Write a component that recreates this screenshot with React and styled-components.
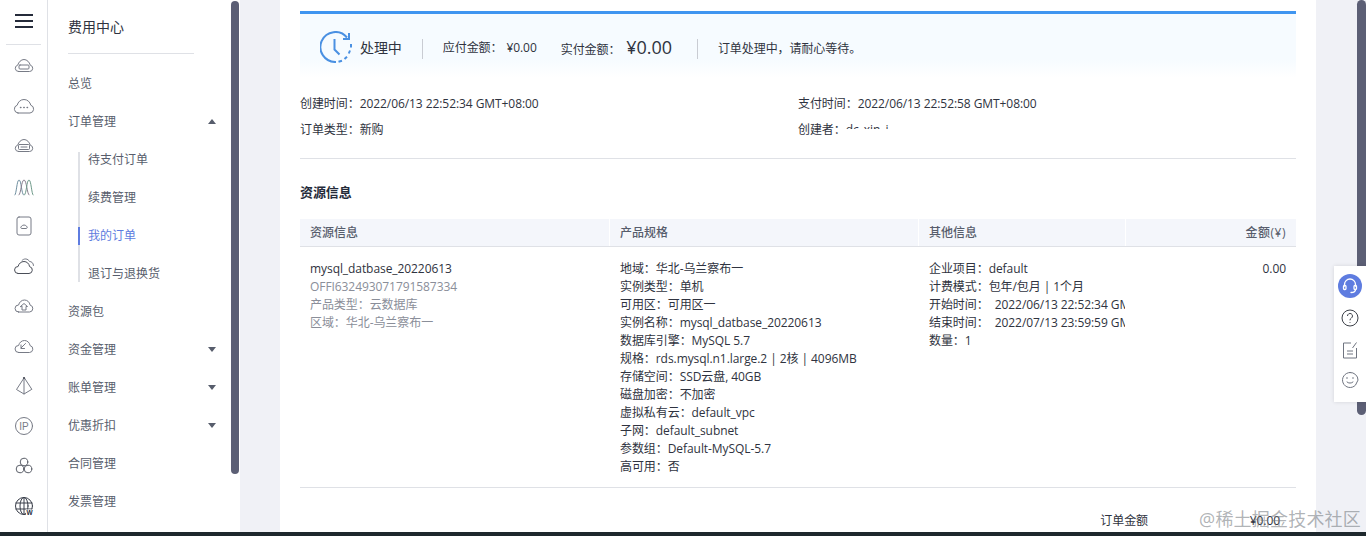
import React from "react";
import styled, { createGlobalStyle } from "styled-components";

const GlobalStyle = createGlobalStyle`
  html, body {
    margin: 0;
    padding: 0;
    height: 536px;
    overflow: hidden;
    background: #f0f1f6;
    font-family: "Open Sans", "Noto Sans CJK SC", sans-serif;
    font-size: 12px;
    color: #2f3340;
  }
`;

const Page = styled.div`
  position: relative;
  width: 1366px;
  height: 536px;
  display: flex;
  flex-direction: column;
  overflow: hidden;
`;

const Body = styled.div`
  flex: 1;
  min-height: 0;
  display: flex;
`;

const FooterBar = styled.div`
  height: 4px;
  background: #1e282d;
`;

const Rail = styled.nav`
  width: 47px;
  flex: none;
  background: #fff;
  border-right: 1px solid #dfe1e6;
`;

const RailHead = styled.div`
  height: 45px;
  margin: 0 6px 1px;
  padding-bottom: 2px;
  border-bottom: 1px solid #dfe1e6;
  display: flex;
  align-items: center;
  justify-content: center;
  box-sizing: border-box;
`;

const RailItem = styled.div`
  height: 40px;
  display: flex;
  align-items: center;
  justify-content: center;
`;

const Sidebar = styled.aside`
  position: relative;
  width: 192px;
  flex: none;
  background: #fff;
  padding-left: 20px;
  box-sizing: border-box;
`;

const SideTitle = styled.div`
  width: 126px;
  height: 54px;
  line-height: 54px;
  margin-bottom: 10px;
  font-size: 14px;
  color: #2f3340;
  border-bottom: 1px solid #dfe1e6;
  box-sizing: border-box;
`;

const SideItem = styled.div`
  width: 148px;
  height: 38px;
  display: flex;
  align-items: center;
  justify-content: space-between;
  color: #575d6c;
`;

const Caret = styled.span`
  width: 0;
  height: 0;
  border-left: 4px solid transparent;
  border-right: 4px solid transparent;
  ${(p) =>
    p.$up
      ? "border-bottom: 5px solid #575d6c;"
      : "border-top: 5px solid #575d6c;"}
`;

const SubList = styled.div`
  margin: 12px 0 10px 10px;
  border-left: 2px solid #dfe1e6;
  height: 130px;
`;

const SubItem = styled.div`
  height: 18px;
  line-height: 18px;
  margin-bottom: 20px;
  padding-left: 8px;
  position: relative;
  top: -1px;
  color: ${(p) => (p.$active ? "#5e7ce0" : "#575d6c")};
  ${(p) =>
    p.$active &&
    `
    margin-left: -2px;
    border-left: 2px solid #5e7ce0;
  `}
`;

const ScrollThumb = styled.div`
  position: absolute;
  top: ${(p) => p.$top}px;
  width: 9px;
  height: ${(p) => p.$height}px;
  background: #5c5f75;
  border-radius: 5px;
`;

const SideThumb = styled(ScrollThumb)`
  right: 1px;
  width: 8px;
`;

const PageThumb = styled(ScrollThumb)`
  right: 0;
`;

const Main = styled.main`
  flex: 1;
  min-width: 0;
  padding: 0 50px 0 40px;
`;

const Card = styled.div`
  height: 100%;
  background: #fff;
  padding: 11px 20px 0;
  overflow: hidden;
  box-sizing: border-box;
  letter-spacing: -0.07px;
`;

const Banner = styled.div`
  height: 67px;
  border-top: 3px solid #3f95f0;
  background: linear-gradient(#f6fbff 0, #f6fbff 70%, #fff 100%);
  padding: 2px 0 0 20px;
  display: flex;
  align-items: center;
  box-sizing: border-box;
`;

const StatusText = styled.span`
  font-size: 14px;
  margin-left: 8px;
`;

const VLine = styled.span`
  width: 1px;
  height: 20px;
  background: #c9ccd3;
  margin: 4px 20px 0 ${(p) => (p.$flush ? 0 : 20)}px;
`;

const Amount = styled.span`
  margin-right: ${(p) => p.$gap}px;
  display: flex;
  align-items: baseline;
`;

const SmallValue = styled.span`
  margin-left: 4px;
`;

const BigValue = styled.span`
  font-size: 18px;
  margin-left: 6px;
`;

const BannerNote = styled.span`
  margin-top: 2px;
`;

const InfoGrid = styled.div`
  display: grid;
  grid-template-columns: 498px 1fr;
  padding: 13px 0 15px;
  border-bottom: 1px solid #dfe1e6;
`;

const InfoCell = styled.div`
  height: 26px;
  line-height: 26px;
  white-space: nowrap;
`;

const ClippedName = styled.span`
  display: inline-block;
  height: 8px;
  width: 46px;
  line-height: 18px;
  overflow: hidden;
  vertical-align: 5px;
`;

const SectionTitle = styled.h3`
  margin: 0;
  height: 60px;
  line-height: 66px;
  font-size: 13px;
  font-weight: 600;
  color: #252b3a;
`;

const TableHead = styled.div`
  display: grid;
  grid-template-columns: 309px 309px 207px 171px;
  height: 28px;
  background: #f4f6fb;
  border-bottom: 1px solid #dfe1e6;
  box-sizing: border-box;
`;

const HeadCell = styled.div`
  padding: 1px 10px 0;
  line-height: 26px;
  font-weight: 500;
  color: #575d6c;
  text-align: ${(p) => (p.$right ? "right" : "left")};
  letter-spacing: ${(p) => (p.$right ? "0.5px" : "0")};
  & + & {
    border-left: 1px solid #fff;
  }
`;

const TableRow = styled.div`
  display: grid;
  grid-template-columns: 309px 309px 207px 171px;
  padding: 13px 0 11px;
  border-bottom: 1px solid #dfe1e6;
`;

const Cell = styled.div`
  padding: 0 10px;
  line-height: 18px;
  overflow: hidden;
  white-space: nowrap;
  text-align: ${(p) => (p.$right ? "right" : "left")};
  & + & {
    padding-left: 11px;
  }
  & + & + & + & {
    padding-left: 0;
  }
`;

const Line = styled.div`
  white-space: pre;
  color: ${(p) => (p.$muted ? "#8a8e99" : "#2f3340")};
`;

const SummaryRow = styled.div`
  display: flex;
  justify-content: flex-end;
  padding: 24px 16px 0 0;
  line-height: 18px;
`;

const SummaryValue = styled.span`
  width: 132px;
  text-align: right;
`;

const Widget = styled.div`
  position: absolute;
  top: 266px;
  right: 0;
  width: 32px;
  height: 136px;
  background: #fff;
  box-shadow: 0 0 4px rgba(0, 0, 0, 0.12);
  display: flex;
  flex-direction: column;
  align-items: center;
  padding-top: 4px;
  box-sizing: border-box;
`;

const WidgetItem = styled.div`
  height: 32px;
  width: 100%;
  display: flex;
  align-items: center;
  justify-content: center;
  margin-top: ${(p) => p.$shift || 0}px;
`;

const HelpBadge = styled.div`
  width: 24px;
  height: 24px;
  border-radius: 50%;
  background: #5e7ce0;
  display: flex;
  align-items: center;
  justify-content: center;
`;

const Watermark = styled.div`
  position: absolute;
  right: 5px;
  bottom: 5px;
  font-size: 18px;
  line-height: 24px;
  letter-spacing: 0.2px;
  color: rgba(110, 115, 120, 0.55);
`;

const Icon = ({ color = "#777b86", sw = 1, children }) => (
  <svg width="22" height="22" viewBox="0 0 22 22" fill="none" stroke={color} strokeWidth={sw} strokeLinecap="round" strokeLinejoin="round">
    {children}
  </svg>
);

const dome = "M5.500 16.500h11a3.200 3.200 0 0 0 .8-6.300C16.400 7.200 14 4.500 11 4.500S5.600 7.200 4.700 10.200a3.200 3.200 0 0 0 .8 6.300z";
const puff = "M5.500 17h11a3.500 3.500 0 0 0 .6-6.900C16.600 7 14.200 5 11.500 5 8.600 5 6.200 7.200 5.600 10a3.500 3.500 0 0 0-.1 7z";

const railIcons = [
  <Icon><path d={dome} /><rect x="6" y="10" width="10" height="4" rx="1" /></Icon>,
  <Icon>
    <path d="M5 18h12a4 4 0 0 0 .8-7.800C17 7 14.500 4.500 11 4.500S5 7 4.200 10.200A4 4 0 0 0 5 18z" />
    <path d="M7.500 12.500h.4M10.800 12.500h.4M14.100 12.500h.4" strokeWidth="1.500" />
  </Icon>,
  <Icon><path d={dome} /><rect x="5.500" y="9.500" width="11" height="5" rx="1" /><path d="M8 12h6" /></Icon>,
  <Icon>
    <path d="M2 20c1.500-1 1.800-15 4-15 2.400 0 2.400 14 4.500 15" stroke="#6f8fa0" />
    <path d="M6 20c2-1 2.400-15 5-15s3 14 5 15" stroke="#8a7f8f" />
    <path d="M11.500 20c2.100-1 2.100-15 4.500-15 2.200 0 2.500 14 4 15" stroke="#6f9a8a" />
  </Icon>,
  <Icon>
    <rect x="4" y="2" width="14" height="18" rx="2" />
    <path d="M8.500 13.500c-1.100 0-1.100-2.200.2-2.200.5-1.700 4.200-1.700 4.700 0 1.200 0 1.200 2.200 0 2.200z" />
  </Icon>,
  <Icon>
    <path d={puff} transform="translate(-.5 1.500)" stroke="#4a4e58" />
    <path d="M9 5.500c2-2.500 6-2 7.500 1 2 0 4 1.500 4 4" />
  </Icon>,
  <Icon><path d={puff} /><path d="M7.500 11.500 11 8.500l3.500 3h-1.500v3.500H9v-3.500z" /></Icon>,
  <Icon><path d={puff} transform="translate(0 .5)" /><path d="M12.500 8.500 8 13M8 10v3.500h3.500" /></Icon>,
  <Icon>
    <path d="M11 3 3.500 14.500 11 19l7.500-4.500zM11 3v16" />
    <circle cx="11" cy="3" r="1.100" fill="#4a4e58" stroke="none" />
  </Icon>,
  <Icon>
    <circle cx="11" cy="11" r="8.500" />
    <text x="11" y="14.500" fontSize="10" textAnchor="middle" fill="#777b86" stroke="none" fontFamily="Liberation Sans, sans-serif">IP</text>
  </Icon>,
  <Icon color="#5a5e68"><circle cx="11" cy="7" r="3.800" /><circle cx="7" cy="14" r="3.800" /><circle cx="15" cy="14" r="3.800" /></Icon>,
  <Icon color="#3a3f4b">
    <circle cx="11" cy="11" r="8.500" />
    <ellipse cx="11" cy="11" rx="4" ry="8.500" />
    <path d="M11 2.500v17M3 8h16M3 14h16" />
    <rect x="13" y="14.500" width="7" height="6" fill="#fff" stroke="none" />
    <text x="16.500" y="20" fontSize="6.500" textAnchor="middle" fill="#252b3a" stroke="none" fontWeight="700" fontFamily="Liberation Sans, sans-serif">W</text>
  </Icon>,
];

const ClockIcon = () => (
  <svg width="32" height="32" viewBox="0 0 32 32" fill="none" stroke="#4a90e2" strokeWidth="2">
    <path d="M27 6.500A15 15 0 1 0 16 31" />
    <path d="M18.500 30.800l3.500-1M24.500 28l2.500-2.300M28.800 22.500l1.200-3M31 16.500v-3.500" />
    <path d="M29 2v6h-6" />
    <path d="M14.500 8v10.500l5 5" />
  </svg>
);

const leftInfo = [
  ["mysql_datbase_20220613"],
  ["OFFI632493071791587334", true],
  ["产品类型：云数据库", true],
  ["区域：华北-乌兰察布一", true],
];

const specs = [
  "地域：华北-乌兰察布一",
  "实例类型：单机",
  "可用区：可用区一",
  "实例名称：mysql_datbase_20220613",
  "数据库引擎：MySQL 5.7",
  "规格：rds.mysql.n1.large.2 | 2核 | 4096MB",
  "存储空间：SSD云盘, 40GB",
  "磁盘加密：不加密",
  "虚拟私有云：default_vpc",
  "子网：default_subnet",
  "参数组：Default-MySQL-5.7",
  "高可用：否",
];

const others = [
  "企业项目：default",
  "计费模式：包年/包月 | 1个月",
  "开始时间：  2022/06/13 22:52:34 GMT+08:00",
  "结束时间：  2022/07/13 23:59:59 GMT+08:00",
  "数量：1",
];

export default function App() {
  return (
    <Page>
      <GlobalStyle />
      <Body>
        <Rail>
          <RailHead>
            <svg width="18" height="16" viewBox="0 0 18 16" stroke="#252b3a" strokeWidth="2">
              <path d="M0 2h18M0 8h18M0 14h18" />
            </svg>
          </RailHead>
          {railIcons.map((icon, i) => (
            <RailItem key={i}>{icon}</RailItem>
          ))}
        </Rail>
        <Sidebar>
          <SideTitle>费用中心</SideTitle>
          <SideItem>总览</SideItem>
          <SideItem>
            订单管理
            <Caret $up />
          </SideItem>
          <SubList>
            <SubItem>待支付订单</SubItem>
            <SubItem>续费管理</SubItem>
            <SubItem $active>我的订单</SubItem>
            <SubItem>退订与退换货</SubItem>
          </SubList>
          <SideItem>资源包</SideItem>
          <SideItem>
            资金管理
            <Caret />
          </SideItem>
          <SideItem>
            账单管理
            <Caret />
          </SideItem>
          <SideItem>
            优惠折扣
            <Caret />
          </SideItem>
          <SideItem>合同管理</SideItem>
          <SideItem>发票管理</SideItem>
          <SideThumb $top={1} $height={473} />
        </Sidebar>
        <Main>
          <Card>
            <Banner>
              <ClockIcon />
              <StatusText>处理中</StatusText>
              <VLine />
              <Amount $gap={24}>
                应付金额：
                <SmallValue>¥0.00</SmallValue>
              </Amount>
              <Amount $gap={25}>
                实付金额：
                <BigValue>¥0.00</BigValue>
              </Amount>
              <VLine $flush />
              <BannerNote>订单处理中，请耐心等待。</BannerNote>
            </Banner>
            <InfoGrid>
              <InfoCell>创建时间：2022/06/13 22:52:34 GMT+08:00</InfoCell>
              <InfoCell>支付时间：2022/06/13 22:52:58 GMT+08:00</InfoCell>
              <InfoCell>订单类型：新购</InfoCell>
              <InfoCell>
                创建者：<ClippedName>dc_xin_i</ClippedName>
              </InfoCell>
            </InfoGrid>
            <SectionTitle>资源信息</SectionTitle>
            <TableHead>
              <HeadCell>资源信息</HeadCell>
              <HeadCell>产品规格</HeadCell>
              <HeadCell>其他信息</HeadCell>
              <HeadCell $right>金额(¥)</HeadCell>
            </TableHead>
            <TableRow>
              <Cell>
                {leftInfo.map(([text, muted]) => (
                  <Line key={text} $muted={muted}>{text}</Line>
                ))}
              </Cell>
              <Cell>
                {specs.map((text) => (
                  <Line key={text}>{text}</Line>
                ))}
              </Cell>
              <Cell>
                {others.map((text) => (
                  <Line key={text}>{text}</Line>
                ))}
              </Cell>
              <Cell $right>0.00</Cell>
            </TableRow>
            <SummaryRow>
              订单金额
              <SummaryValue>¥0.00</SummaryValue>
            </SummaryRow>
          </Card>
        </Main>
      </Body>
      <FooterBar />
      <PageThumb $top={0} $height={415} />
      <Widget>
        <WidgetItem>
          <HelpBadge>
            <svg width="18" height="18" viewBox="0 0 18 18" fill="none" stroke="#fff" strokeWidth="1.300" strokeLinecap="round">
              <path d="M3.500 9V7.500a5.500 5.500 0 0 1 11 0V9" />
              <rect x="2.500" y="8.500" width="2.500" height="4" rx="1" />
              <rect x="13" y="8.500" width="2.500" height="4" rx="1" />
              <path d="M14.500 12.500c0 2-2 3-4.500 3" />
            </svg>
          </HelpBadge>
        </WidgetItem>
        <WidgetItem>
          <svg width="20" height="20" viewBox="0 0 20 20" fill="none" stroke="#3c4048" strokeWidth="1">
            <circle cx="10" cy="10" r="8" />
            <path d="M7.500 8a2.500 2.500 0 1 1 3.800 2.100c-.9.600-1.300 1-1.300 2.200M10 14v.8" />
          </svg>
        </WidgetItem>
        <WidgetItem>
          <svg width="20" height="20" viewBox="0 0 20 20" fill="none" stroke="#6f7480" strokeWidth="1">
            <path d="M11 3H3.500v15h13V8" />
            <path d="M7 11h6M7 14h6M12.500 8l4-5.500" />
          </svg>
        </WidgetItem>
        <WidgetItem $shift={-2}>
          <svg width="20" height="20" viewBox="0 0 20 20" fill="none" stroke="#6f7480" strokeWidth="1" strokeLinecap="round">
            <path d="M10 2.500a7.500 7.500 0 1 0 5.500 12.600l2.500-5A7.500 7.500 0 0 0 10 2.500z" />
            <path d="M6.500 8h1M12.500 8h1M7 12c1.500 1.500 4.500 1.500 6 0" />
          </svg>
        </WidgetItem>
      </Widget>
      <Watermark>@稀土掘金技术社区</Watermark>
    </Page>
  );
}
